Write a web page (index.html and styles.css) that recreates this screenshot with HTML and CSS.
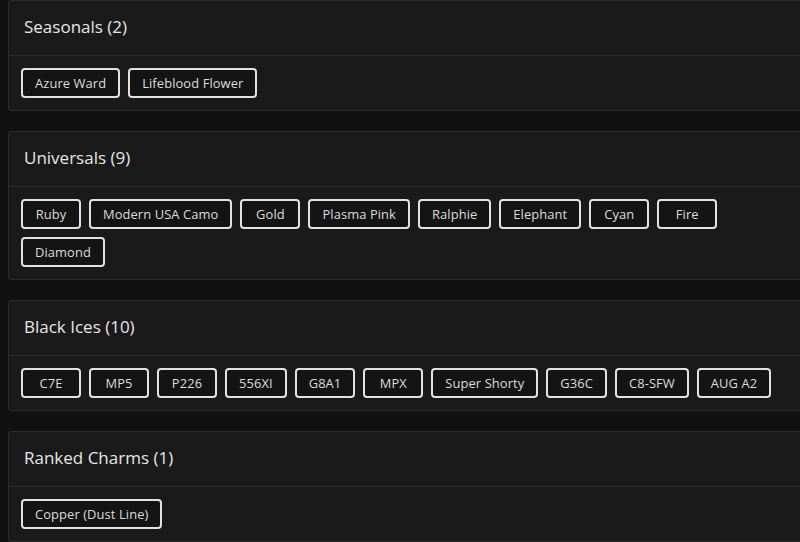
FILE: index.html
```html
<!DOCTYPE html>
<html lang="en">
<head>
<meta charset="utf-8">
<title>Charms</title>
<link rel="stylesheet" href="styles.css">
</head>
<body>
<main class="page">
  <section class="card">
    <h2 class="card-title">Seasonals (2)</h2>
    <div class="card-body">
      <span class="chip">Azure Ward</span>
      <span class="chip">Lifeblood Flower</span>
    </div>
  </section>
  <section class="card">
    <h2 class="card-title">Universals (9)</h2>
    <div class="card-body">
      <span class="chip">Ruby</span>
      <span class="chip">Modern USA Camo</span>
      <span class="chip">Gold</span>
      <span class="chip">Plasma Pink</span>
      <span class="chip">Ralphie</span>
      <span class="chip">Elephant</span>
      <span class="chip">Cyan</span>
      <span class="chip">Fire</span>
      <span class="chip">Diamond</span>
    </div>
  </section>
  <section class="card">
    <h2 class="card-title">Black Ices (10)</h2>
    <div class="card-body">
      <span class="chip">C7E</span>
      <span class="chip">MP5</span>
      <span class="chip">P226</span>
      <span class="chip">556XI</span>
      <span class="chip">G8A1</span>
      <span class="chip">MPX</span>
      <span class="chip">Super Shorty</span>
      <span class="chip">G36C</span>
      <span class="chip">C8-SFW</span>
      <span class="chip">AUG A2</span>
    </div>
  </section>
  <section class="card">
    <h2 class="card-title">Ranked Charms (1)</h2>
    <div class="card-body">
      <span class="chip">Copper (Dust Line)</span>
    </div>
  </section>
</main>
</body>
</html>
```
FILE: styles.css
```css
html, body {
  margin: 0;
  padding: 0;
  background: #111111;
  overflow: hidden;
}
body {
  font-family: "Open Sans", "Liberation Sans", sans-serif;
  color: #e4e4e4;
}
.page {
  display: flex;
  flex-direction: column;
  gap: 20px;
  padding-left: 8px;
  margin-right: -12px;
}
.card {
  background: #1a1a1a;
  border: 1px solid #2c2c2c;
  border-radius: 3px;
}
.card-title {
  box-sizing: border-box;
  margin: 0;
  height: 55px;
  display: flex;
  align-items: center;
  padding: 0 15px 3px;
  font-size: 17px;
  font-weight: 500;
  color: #e6e6e6;
  border-bottom: 1px solid #2c2c2c;
}
.card-body {
  display: flex;
  flex-wrap: wrap;
  gap: 8px;
  padding: 12px;
}
.chip {
  box-sizing: border-box;
  height: 30px;
  min-width: 60px;
  padding: 0 12px 1px;
  display: inline-flex;
  align-items: center;
  justify-content: center;
  border: 2px solid #e2e2e2;
  border-radius: 4px;
  background: #141414;
  font-size: 12.9px;
  letter-spacing: 0.1px;
  color: #dcdcdc;
}
```
